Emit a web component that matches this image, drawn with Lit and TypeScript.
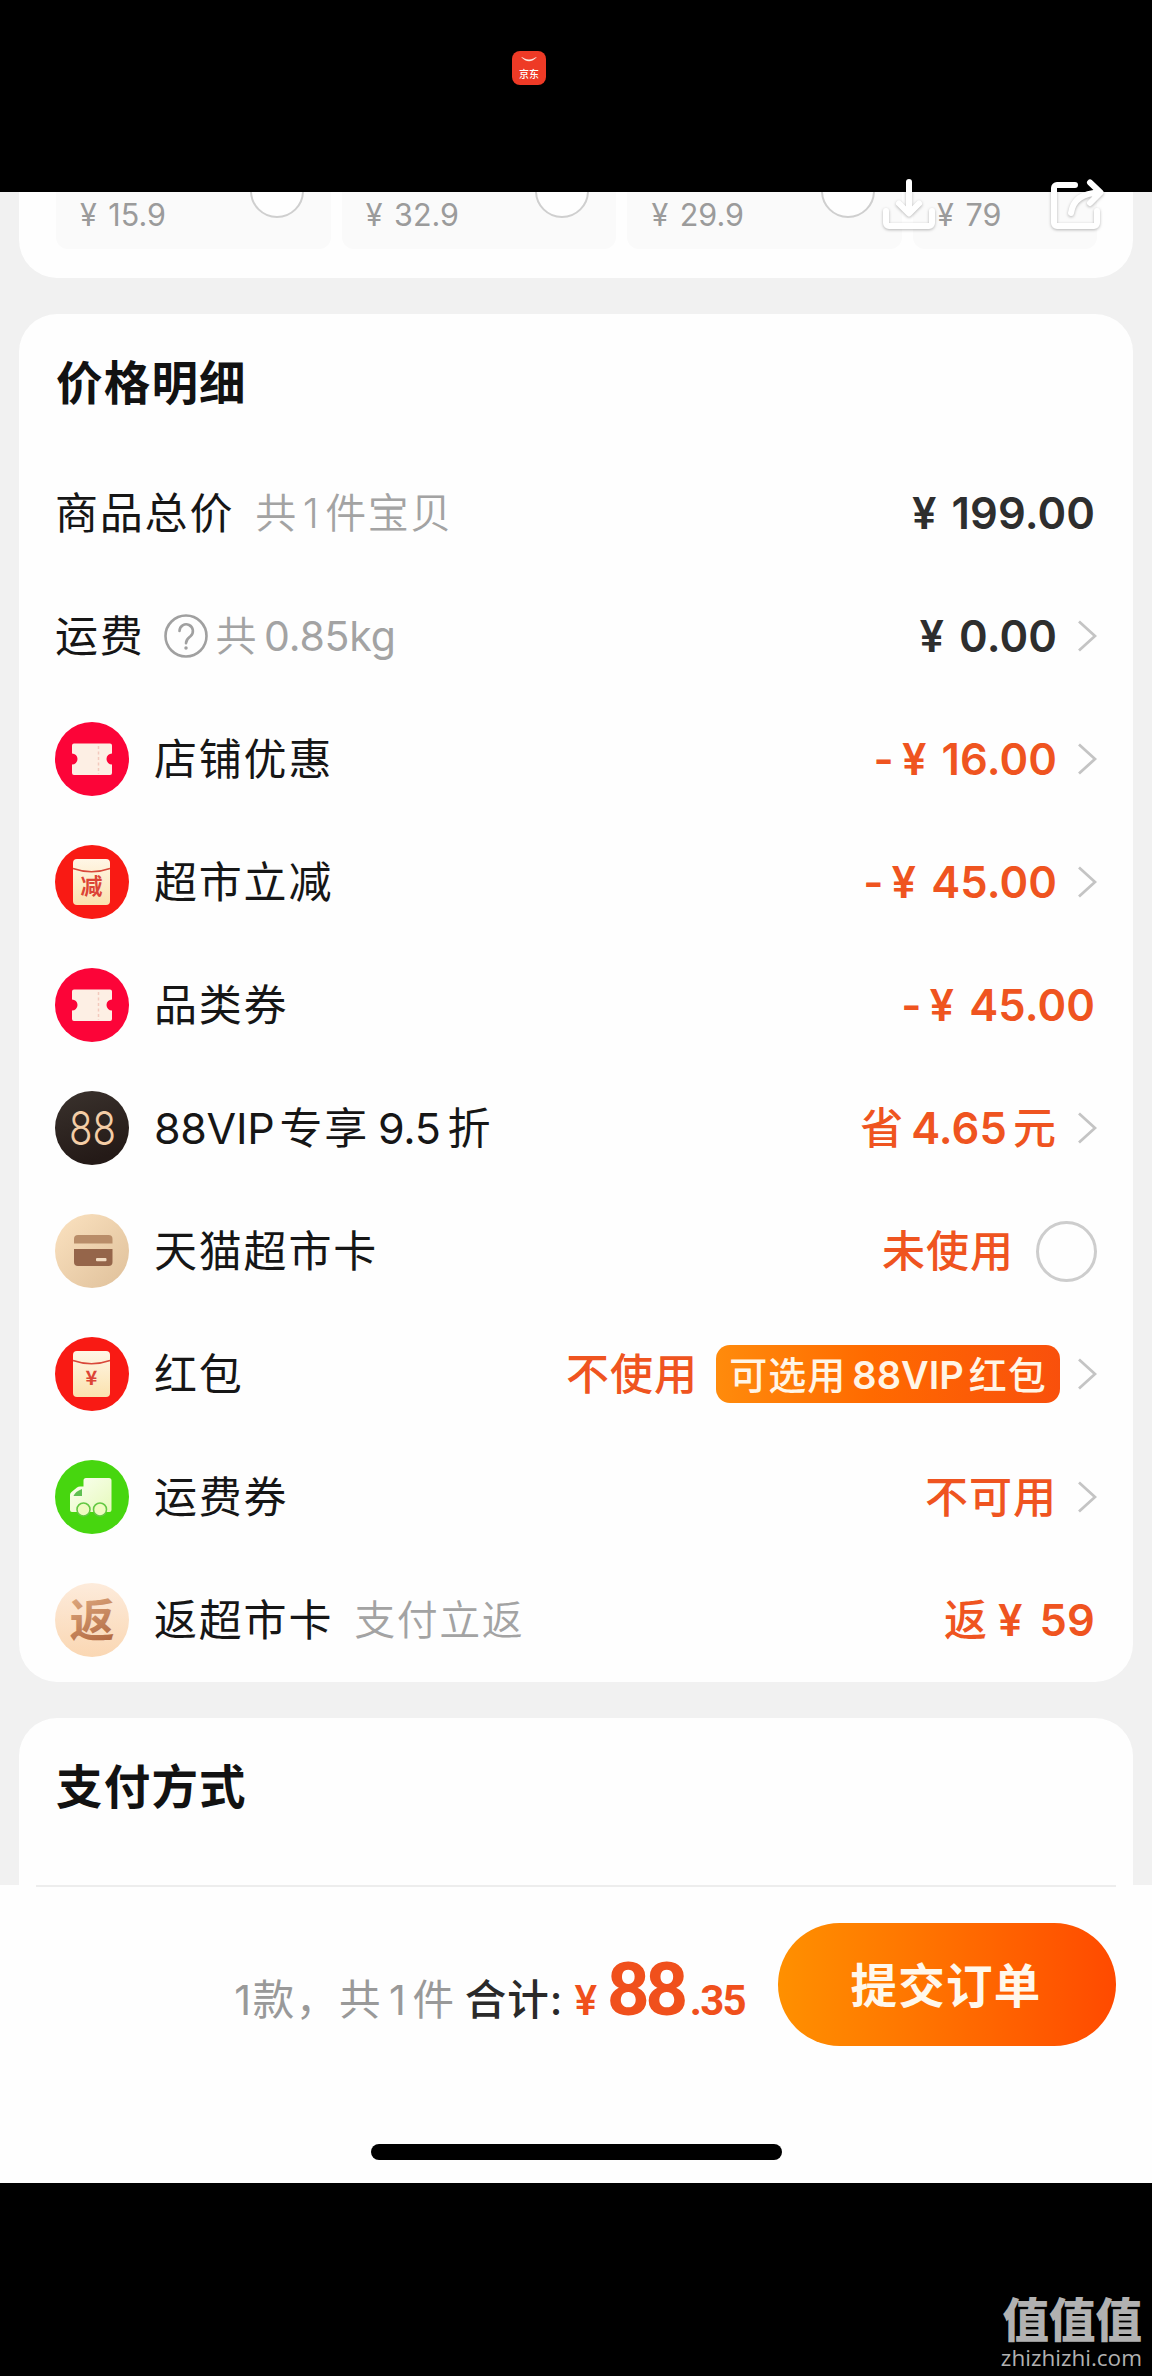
import { LitElement, html, css, svg, nothing, TemplateResult } from "lit";
import { customElement, property } from "lit/decorators.js";

type IconName = "ticket" | "reduce" | "vip" | "card" | "packet" | "truck" | "rebate";

interface PriceRow {
  icon?: IconName;
  label: TemplateResult;
  help?: boolean;
  note?: TemplateResult;
  value: TemplateResult;
  dark?: boolean;
  badge?: TemplateResult;
  end?: "arrow" | "radio";
}

const n = (t: string) => html`<span class="n">${t}</span>`;
const yen = (t: string) => html`<span class="yen">¥</span><span>${t}</span>`;
const minus = (t: string) => html`<span class="minus">-</span>${yen(t)}`;

const ROWS: PriceRow[] = [
  { label: html`商品总价`, note: html`共${n("1")}件宝贝`, value: yen("199.00"), dark: true },
  { label: html`运费`, help: true, note: html`共<span class="kg">0.85kg</span>`, value: yen("0.00"), dark: true, end: "arrow" },
  { icon: "ticket", label: html`店铺优惠`, value: minus("16.00"), end: "arrow" },
  { icon: "reduce", label: html`超市立减`, value: minus("45.00"), end: "arrow" },
  { icon: "ticket", label: html`品类券`, value: minus("45.00") },
  { icon: "vip", label: html`<span class="lead">88VIP</span>专享${n("9.5")}折`, value: html`省${n("4.65")}元`, end: "arrow" },
  { icon: "card", label: html`天猫超市卡`, value: html`未使用`, end: "radio" },
  { icon: "packet", label: html`红包`, value: html`不使用`, badge: html`可选用${n("88VIP")}红包`, end: "arrow" },
  { icon: "truck", label: html`运费券`, value: html`不可用`, end: "arrow" },
  { icon: "rebate", label: html`返超市卡`, note: html`支付立返`, value: html`返<span class="rb">${yen("59")}</span>` },
];

const envelope = (mark: string, size: number) => svg`
  <circle cx="37" cy="37" r="37" fill="#f91a14"/>
  <rect x="18" y="14" width="37" height="46" rx="4" fill="url(#env)"/>
  <path d="M18 23.5Q36.500 30 55 23.500" fill="none" stroke="#d9483a" stroke-width="1.6"/>
  <text x="36.500" y="${size > 20 ? 49 : 48}" text-anchor="middle" font-size="${size}" font-weight="700" fill="#dc4436">${mark}</text>`;

const ICONS: Record<IconName, TemplateResult> = {
  ticket: svg`
    <circle cx="37" cy="37" r="37" fill="#fc0438"/>
    <path d="M19 21.500H55a2 2 0 0 1 2 2V31.500a5.500 5.500 0 0 0 0 11V51a2 2 0 0 1-2 2H19a2 2 0 0 1-2-2V42.500a5.500 5.500 0 0 0 0-11V23.500a2 2 0 0 1 2-2Z" fill="#fdefe4"/>
    <path d="M43.500 24V52" stroke="#f3c9bd" stroke-width="1.500" stroke-dasharray="3 2.500"/>`,
  reduce: envelope("减", 22),
  packet: envelope("¥", 20),
  vip: svg`
    <circle cx="37" cy="37" r="37" fill="url(#night)"/>
    <text class="thin" x="14" y="54" textLength="47" lengthAdjust="spacingAndGlyphs" font-size="47" fill="#f4cda6">88</text>`,
  card: svg`
    <circle cx="37" cy="37" r="37" fill="url(#sand)"/>
    <path d="M19 29.500V25a4 4 0 0 1 4-4H53.500a4 4 0 0 1 4 4V29.500Z" fill="#b98d69"/>
    <path d="M19 35H57.500V48a4 4 0 0 1-4 4H23a4 4 0 0 1-4-4Z" fill="#95654a"/>
    <rect x="41" y="44" width="10.500" height="3.200" rx="1" fill="#f3dcc2"/>`,
  truck: svg`
    <circle cx="37" cy="37" r="37" fill="#47d60f"/>
    <path d="M31 18H54a2.500 2.500 0 0 1 2.500 2.500V50a2 2 0 0 1-2 2H17a2 2 0 0 1-2-2V35a4 4 0 0 1 1.500-3L22 27.500a5 5 0 0 1 3-1H28.500V20.500A2.500 2.500 0 0 1 31 18Z" fill="url(#van)"/>
    <path d="M27 29V36H18.500Q20 31.500 27 29Z" fill="#5fc052"/>
    <circle cx="28.500" cy="49.500" r="6.500" fill="#eefbc0" stroke="#63c843" stroke-width="1.600"/>
    <circle cx="45" cy="49.500" r="6.500" fill="#eefbc0" stroke="#63c843" stroke-width="1.600"/>`,
  rebate: svg`
    <circle cx="37" cy="37" r="37" fill="url(#peach)"/>
    <text x="37" y="53.500" text-anchor="middle" font-size="45" font-weight="700" fill="url(#copper)">返</text>`,
};

@customElement("row-icon")
class RowIcon extends LitElement {
  @property() name: IconName = "ticket";

  static styles = css`
    :host { display: block; width: 74px; height: 74px; flex: none; }
    svg { display: block; }
    text { font-family: "Noto Sans CJK SC", sans-serif; }
    .thin { font-family: Inter, sans-serif; font-weight: 300; }
  `;

  render() {
    return html`<svg width="74" height="74" viewBox="0 0 74 74">
      <defs>
        <linearGradient id="env" x2="0" y2="1"><stop stop-color="#fff6e6"/><stop offset="1" stop-color="#fbe2ae"/></linearGradient>
        <linearGradient id="night" x2="0.300" y2="1"><stop stop-color="#3a322d"/><stop offset="1" stop-color="#241a17"/></linearGradient>
        <linearGradient id="sand" x2="1" y2="1"><stop stop-color="#fbe2c0"/><stop offset="1" stop-color="#dfc09a"/></linearGradient>
        <linearGradient id="peach" x2="0" y2="1"><stop stop-color="#fdebdb"/><stop offset="1" stop-color="#fad7b3"/></linearGradient>
        <linearGradient id="copper" x2="0.300" y2="1"><stop stop-color="#e6b68c"/><stop offset="1" stop-color="#b46c44"/></linearGradient>
        <linearGradient id="van" x2="1" y2="1"><stop stop-color="#fbfff2"/><stop offset="1" stop-color="#e6fabb"/></linearGradient>
      </defs>
      ${ICONS[this.name]}
    </svg>`;
  }
}

@customElement("app-root")
class AppRoot extends LitElement {
  static styles = css`
    :host {
      display: block; position: relative; width: 1152px; height: 2376px; overflow: hidden; background: #000;
      font-family: Inter, "Noto Sans CJK SC", sans-serif; color: #161616;
    }
    * { box-sizing: border-box; }
    svg { display: block; flex: none; }
    .page { display: flex; flex-direction: column; height: 2376px; white-space: nowrap; }
    .status { height: 192px; padding: 51px 0 0 512px; flex: none; }
    .jd { font-family: "Noto Sans CJK SC", sans-serif; }
    .screen { height: 1991px; flex: none; background: #f1f1f1; display: flex; flex-direction: column; overflow: hidden; }
    .scroll { height: 1693px; flex: none; padding: 0 19px; overflow: hidden; display: flex; flex-direction: column; gap: 35.500px; }
    .panel { background: #fefefe; border-radius: 38px; flex: none; padding: 0 36px 0 37px; }
    .goods { height: 86px; border-radius: 0 0 38px 38px; display: flex; gap: 11px; }
    .item {
      width: 274.700px; height: 57px; flex: none; background: #fafafa; border-radius: 0 0 12px 12px; overflow: hidden;
      display: flex; justify-content: space-between; padding: 0 27px 0 24px; color: #9b9b9b; font-size: 30.500px;
    }
    .item:last-child { flex: 1; }
    .cost { line-height: 45px; letter-spacing: 0; word-spacing: 3px; }
    .pick { width: 54px; height: 54px; border-radius: 50%; border: 2.500px solid #cfcfcf; background: #fefefe; margin-top: -28px; }
    .title { margin: 0; font-size: 46.500px; font-weight: 700; letter-spacing: 1.200px; line-height: 50px; padding-top: 44px; color: #121212; }
    .detail { height: 1368.500px; }
    .detail .title { height: 137.500px; }
    .pay { height: 240px; }
    .row { height: 123.100px; display: flex; align-items: center; }
    .row row-icon { margin-right: 25px; margin-left: -1px; }
    .label { font-size: 43px; letter-spacing: 1.800px; line-height: 60px; }
    .row > .label:first-child { margin-left: -1px; }
    .label .n { margin: 0 7px 0 9px; letter-spacing: -0.300px; }
    .value .n { margin: 0 6px 0 7px; }
    .lead { margin-right: 5px; letter-spacing: -0.300px; }
    .note { font-size: 41px; letter-spacing: 1.500px; line-height: 60px; color: #a3a3a3; margin-left: 21px; font-weight: 350; }
    .note .n { margin: 0 5px; }
    .kg { margin-left: 6px; letter-spacing: -0.200px; font-weight: 400; }
    .help { margin-left: 19px; }
    .help + .note { margin-left: 8px; }
    .value { margin-left: auto; font-size: 43px; letter-spacing: 1px; font-weight: 500; line-height: 60px; color: #ef5420; display: flex; align-items: baseline; }
    .value > span, .value .rb { font-weight: 600; font-size: 43.500px; letter-spacing: 0.100px; }
    .value:last-child { margin-right: 2px; }
    .dark { color: #2e2e2e; }
    .value .yen { margin-right: 15px; }
    .value .minus { margin-right: 8px; }
    .rb { margin-left: 10px; }
    .value .rb .yen { margin-right: 17px; }
    .arrow { margin-left: 20px; }
    .radio { width: 61px; height: 61px; border-radius: 50%; border: 3px solid #cdcdcd; margin-left: 22px; }
    .badge {
      height: 58px; width: 344px; margin: 0 -3px 0 18px; border-radius: 14px; display: flex; align-items: center; justify-content: center; padding-bottom: 4px;
      background: linear-gradient(90deg, #ff8b0c, #ff6a00 45%, #f9500c); color: #fff5e6; font-size: 38px; font-weight: 500; letter-spacing: 1px;
    }
    .badge .n { margin: 0 5px 0 6px; font-weight: 600; letter-spacing: 0; }
    .footer { flex: 1; background: #fefefe; padding: 0 36px; display: flex; flex-direction: column; align-items: center; }
    .rule { width: 1080px; height: 2px; background: #ededed; flex: none; }
    .checkout { width: 1080px; height: 123px; margin-top: 36px; display: flex; align-items: center; justify-content: flex-end; }
    .sum { display: flex; align-items: baseline; margin-right: 33px; font-size: 41.500px; padding-top: 9px; }
    .count { color: #999; letter-spacing: 1.600px; }
    .count .n { margin: 0 5px 0 7px; }
    .total { margin-left: 9px; color: #2a2a2a; font-weight: 500; letter-spacing: 1px; }
    .money { font-family: Roboto, sans-serif; font-weight: 700; color: #f0501c; margin-left: 11px; font-size: 42px; letter-spacing: -1.700px; }
    .money .sign { font: 600 41px Inter, sans-serif; }
    .big { font-size: 75px; letter-spacing: -4.500px; margin: 0 6px 0 11px; }
    .submit {
      width: 338px; height: 123px; border: 0; border-radius: 62px; background: linear-gradient(90deg, #ff9000, #ff7200 45%, #ff4a00);
      color: #fff8ec; font: 700 46.500px "Noto Sans CJK SC", sans-serif; letter-spacing: 1.200px; padding: 0 2px 4px 0;
    }
    .home { width: 411px; height: 16px; border-radius: 8px; background: #000; margin: 98px 0 0 0; }
    .mark { flex: 1; padding: 108px 10px 0 0; display: flex; flex-direction: column; align-items: flex-end; color: #b1b1b1; }
    .logo { font: 900 46.500px/52px "Noto Sans CJK SC", sans-serif; }
    .site { font: 22.500px/24px "Open Sans", sans-serif; margin-top: 3px; }
    .tools { position: absolute; left: 878px; top: 172px; filter: drop-shadow(0 1.500px 1.500px rgba(0, 0, 0, 0.280)); }
  `;

  private row(r: PriceRow) {
    return html`<div class="row">
      ${r.icon ? html`<row-icon .name=${r.icon}></row-icon>` : nothing}
      <div class="label">${r.label}</div>
      ${r.help
        ? html`<svg class="help" width="44" height="44" viewBox="0 0 44 44" fill="none" stroke="#a0a0a0" stroke-width="2.600" stroke-linecap="round">
            <circle cx="22" cy="22" r="20.500"/>
            <path d="M15.500 17a6.700 6.700 0 1 1 11 5.200c-2.700 2.200-4.500 3.300-4.500 7"/>
            <circle cx="22" cy="34" r="1" fill="#a0a0a0" stroke-width="1.500"/>
          </svg>`
        : nothing}
      ${r.note ? html`<div class="note">${r.note}</div>` : nothing}
      <div class="value ${r.dark ? "dark" : ""}">${r.value}</div>
      ${r.badge ? html`<div class="badge"><span>${r.badge}</span></div>` : nothing}
      ${r.end === "arrow"
        ? html`<svg class="arrow" width="20" height="32" viewBox="0 0 20 32" fill="none" stroke="#c4c4c4" stroke-width="2.800"><path d="M2 1.500 18 16 2 30.500"/></svg>`
        : nothing}
      ${r.end === "radio" ? html`<div class="radio"></div>` : nothing}
    </div>`;
  }

  render() {
    return html`
      <div class="page">
        <div class="status">
          <svg class="jd" width="34" height="34" viewBox="0 0 34 34">
            <rect width="34" height="34" rx="8" fill="#ee3a26"/>
            <path d="M9 6q8 8.500 16 0q-2 .3-3.500 1.500q-4.500 2-9 0Q11 6.300 9 6Z" fill="#fbe6df"/>
            <text x="17" y="27" text-anchor="middle" font-size="10" font-weight="500" fill="#fff">京东</text>
          </svg>
        </div>
        <div class="screen">
          <div class="scroll">
            <div class="panel goods">
              ${["15.9", "32.9", "29.9", "79"].map(
                (p, i) => html`<div class="item"><span class="cost">¥ ${p}</span>${i < 3 ? html`<span class="pick"></span>` : nothing}</div>`
              )}
            </div>
            <div class="panel detail">
              <h2 class="title">价格明细</h2>
              ${ROWS.map((r) => this.row(r))}
            </div>
            <div class="panel pay"><h2 class="title">支付方式</h2></div>
          </div>
          <div class="footer">
            <div class="rule"></div>
            <div class="checkout">
              <div class="sum">
                <span class="count">1款，共${n("1")}件</span>
                <span class="total">合计:</span>
                <span class="money"><span class="sign">¥</span><span class="big">88</span>.35</span>
              </div>
              <button class="submit">提交订单</button>
            </div>
            <div class="home"></div>
          </div>
        </div>
        <div class="mark">
          <div class="logo">值值值</div>
          <div class="site">zhizhizhi.com</div>
        </div>
      </div>
      <svg class="tools" width="236" height="64" viewBox="0 0 236 64" fill="none" stroke="#fff" stroke-width="6" stroke-linecap="round" stroke-linejoin="round">
        <path d="M31 10V41M21 31.500 31 41.500 41 31.500"/>
        <path d="M8 39V51a3 3 0 0 0 3 3H51a3 3 0 0 0 3-3V39"/>
        <path d="M197 13H179a3 3 0 0 0-3 3V51a3 3 0 0 0 3 3H216a3 3 0 0 0 3-3V39"/>
        <path d="M193 41Q196 21 222 20.500M212 10.500 222.500 20.500 212 31"/>
      </svg>
    `;
  }
}
